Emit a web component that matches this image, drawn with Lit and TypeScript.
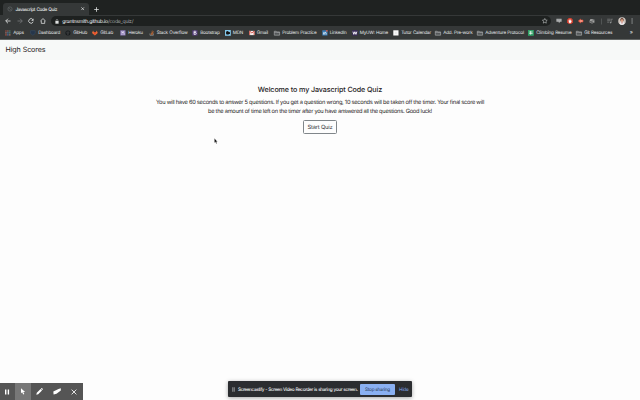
import { LitElement, html, svg, css } from "lit";
import { customElement } from "lit/decorators.js";
import { styleMap } from "lit/directives/style-map.js";

const folder = svg`<path d="M.3 1.3h2l.6.7h2.9v3.4H.3z" fill="#55585a" stroke="#b4b6b7" stroke-width=".6"/><path d="M.3 2.5h5.4" stroke="#b4b6b7" stroke-width=".5"/>`;
const square = (fill: string, inner: unknown) => svg`<rect x=".3" y=".3" width="5.4" height="5.4" fill=${fill}/>${inner}`;

interface Bookmark { label: string; width: number; icon: unknown }

const bookmarks: Bookmark[] = [
  { label: "Apps", width: 25, icon: svg`<g><path d="M.4.4h1.2v1.2H.4zM.4 4.4h1.2v1.2H.4z" fill="#d85a4b"/><path d="M2.4.4h1.2v1.2H2.4zM.4 2.4h1.2v1.2H.4zM4.4 4.4h1.2v1.2H4.4z" fill="#c78374"/><path d="M4.4.4h1.2v1.2H4.4zM4.4 2.4h1.2v1.2H4.4z" fill="#5aa08b"/><path d="M2.4 2.4h1.2v1.2H2.4zM2.4 4.4h1.2v1.2H2.4z" fill="#5487c2"/></g>` },
  { label: "Dashboard", width: 35, icon: svg`<path d="M.6.7h4.8v2.8L3 5.5.6 3.5z" fill="#26364a" stroke="#354c65" stroke-width=".6"/>` },
  { label: "GitHub", width: 27, icon: svg`<circle cx="3" cy="3" r="2.6" fill="#16191b"/><path d="M2.2 5.5V4C.9 3.5 1.2 2 1.7 1.7l.1-.6.7.4h1l.7-.4.1.6c.6.7.6 2-.5 2.3v1.5" fill="#333537"/>` },
  { label: "GitLab", width: 28, icon: svg`<path d="M0 3.2 1.1.4l.9 2h2l.9-2L6 3.2 3 5.6z" fill="#ed6a35"/><path d="m2 2.4 1 3.2 1-3.2z" fill="#df432b"/>` },
  { label: "Heroku", width: 28.5, icon: square("#8b78b6", svg`<path d="M2 1v1.8M2 5V3.5M2 2.8c2-.7 2.2-.2 2.2.5V5M4.2 1l-.5.9" fill="none" stroke="#fff" stroke-width=".7"/>`) },
  { label: "Stack Overflow", width: 43.5, icon: svg`<path d="M1 3.5v2h3.5v-2" fill="none" stroke="#a8a8a8" stroke-width=".6"/><path d="M1.8 4.5h2M2 3.3l2 .5M2.5 2l1.8 1.1M3.6.7l1.2 1.8" stroke="#e87532" stroke-width=".7"/>` },
  { label: "Bootstrap", width: 32.5, icon: square("#553d7d", svg`<path d="M2.1 1.3h1.3c1.2 0 1.2 1.5 0 1.5H2.1h1.4c1.3 0 1.3 1.8 0 1.8H2.1z" fill="none" stroke="#fff" stroke-width=".7"/>`) },
  { label: "MDN", width: 24, icon: svg`<rect width="6" height="6" fill="#83c9ed"/><path d="M1.1 1.7 2.5 1l.8.5 1.8.7v1.9H3.9L3.5 5 1.2 4.3z" fill="#111"/>` },
  { label: "Gmail", width: 25.5, icon: svg`<rect x=".3" y=".9" width="5.4" height="4.4" fill="#f2eeee"/><path d="M.7 5.2V1.1L3 3.1l2.3-2v4.1" fill="none" stroke="#d44a3d" stroke-width=".9"/>` },
  { label: "Problem Practice", width: 47.5, icon: folder },
  { label: "LinkedIn", width: 30, icon: square("#3c7eb8", svg`<path d="M1.6 2.4v2.3M2.8 2.4v2.3M2.8 3.2c.2-1 1.5-.8 1.5.1v1.4" fill="none" stroke="#fff" stroke-width=".7"/><circle cx="5" cy=".9" r=".9" fill="#d75545"/>`) },
  { label: "MyUW: Home", width: 41.5, icon: square("#39295c", svg`<path d="m1 1.7.9 2.8L3 1.8l1.1 2.7L5 1.7" fill="none" stroke="#fff" stroke-width=".9"/>`) },
  { label: "Tutor Calendar", width: 42, icon: square("#f8f8f8", svg`<path d="M3 2v2.2" stroke="#c8cacb" stroke-width=".5"/>`) },
  { label: "Add. Pre-work", width: 42, icon: folder },
  { label: "Adventure Protocol", width: 51, icon: folder },
  { label: "Climbing Resume", width: 48, icon: svg`<rect width="6" height="6" fill="#2fa164"/><path d="M1.2 2.1h3.6M1.2 3.7h3.6M2.7 1.2v3.6" stroke="#fff" stroke-width=".7"/>` },
  { label: "Git Resources", width: 42, icon: folder },
];

@customElement("browser-chrome")
export class BrowserChrome extends LitElement {
  static styles = css`
    :host { display: block; height: 40px; font-family: Inter, "Liberation Sans", sans-serif; background: #1f2221; color: #e4e6e7; text-rendering: geometricPrecision; }
    svg { display: block; flex: none; overflow: visible; }
    .tabs { height: 15px; display: flex; align-items: flex-end; padding-left: 3px; box-sizing: border-box; }
    .tab { width: 85.5px; height: 12px; background: #353838; border-radius: 3px 3px 0 0; display: flex; align-items: center; box-sizing: border-box; padding: 0 4px 0 4px; }
    .title { flex: 1; margin-left: 2.4px; padding-top: 1px; font-size: 4.7px; font-weight: 500; letter-spacing: -0.37px; word-spacing: 0.5px; white-space: nowrap; }
    .plus { margin: 0 0 3.5px 5.5px; }
    .toolbar { height: 12.5px; background: #353838; display: flex; align-items: center; box-sizing: border-box; padding: 0 6.5px 0 5px; }
    .nav { display: flex; gap: 5.6px; }
    .address { width: 500px; flex: none; height: 10px; border-radius: 5px; background: #1e2120; display: flex; align-items: center; box-sizing: border-box; padding: 0 3.5px 0 4px; margin-left: 5px; }
    .url { flex: 1; margin-left: 3.5px; padding-top: 1.2px; font-size: 5.1px; letter-spacing: -0.26px; color: #a4a7a8; white-space: nowrap; }
    .host { color: #f4f6f6; }
    .tools { flex: 1; display: flex; justify-content: space-between; align-items: center; margin-left: 5px; }
    .bookmarks { height: 11.5px; background: #353838; display: flex; align-items: center; box-sizing: border-box; padding: 0 7px 0 5px; }
    .bookmark { display: flex; align-items: center; gap: 2.4px; flex: none; font-size: 4.6px; letter-spacing: -0.19px; word-spacing: 0.3px; white-space: nowrap; color: #e4e7e8; }
    .bookmark span { padding-top: 1.2px; }
    .more { margin-left: auto; font-size: 5.5px; line-height: 6px; }
    .rule { height: 1px; background: #626564; }
  `;

  render() {
    return html`
      <div class="tabs">
        <div class="tab">
          <svg width="6" height="6" viewBox="0 0 6 6"><circle cx="3" cy="3" r="2.1" fill="none" stroke="#626667" stroke-width=".7"/><path d="m1.4 1.6 3.2 2.8" stroke="#626667" stroke-width=".6"/></svg>
          <span class="title">Javascript Code Quiz</span>
          <svg width="3.4" height="3.4" viewBox="0 0 4 4"><path d="m.4.4 3.2 3.2m0-3.2L.4 3.6" stroke="#e6e8e8" stroke-width=".8"/></svg>
        </div>
        <svg class="plus" width="5" height="5" viewBox="0 0 5 5"><path d="M2.5.2v4.6M.2 2.5h4.6" stroke="#e0e2e2" stroke-width=".8"/></svg>
      </div>
      <div class="toolbar">
        <div class="nav">
          <svg width="6" height="6" viewBox="0 0 6 6"><path d="M5.5 3H.8M3 .7.7 3 3 5.3" fill="none" stroke="#e2e4e4" stroke-width=".8"/></svg>
          <svg width="6" height="6" viewBox="0 0 6 6"><path d="M.5 3h4.7M3 .7 5.3 3 3 5.3" fill="none" stroke="#777a7b" stroke-width=".8"/></svg>
          <svg width="6" height="6" viewBox="0 0 6 6"><path d="M4.9 1.6A2.3 2.3 0 1 0 5.2 3.7" fill="none" stroke="#e2e4e4" stroke-width=".8"/><path d="M5.5.4v2.3H3.2z" fill="#e2e4e4"/></svg>
          <svg width="6" height="6" viewBox="0 0 6 6"><path d="M.4 3 3 .6 5.6 3M1.3 2.6v2.8h3.4V2.6" fill="none" stroke="#e2e4e4" stroke-width=".75"/></svg>
        </div>
        <div class="address">
          <svg width="4" height="5" viewBox="0 0 4 5"><path d="M.4 2h3.2v2.7H.4z" fill="#dfe1e1"/><path d="M1.1 2.2V1.4a.9.9 0 0 1 1.8 0v.8" fill="none" stroke="#dfe1e1" stroke-width=".5"/></svg>
          <span class="url"><span class="host">grantnsmith.github.io</span>/code_quiz/</span>
          <svg width="5.6" height="5.6" viewBox="0 0 6 6"><path d="m3 .5.8 1.7 1.8.2-1.3 1.3.3 1.8L3 4.6l-1.6.9.3-1.8L.4 2.4l1.8-.2z" fill="none" stroke="#c9cccc" stroke-width=".6"/></svg>
        </div>
        <div class="tools">
          <svg width="6" height="6" viewBox="0 0 6 6"><path d="M.4.8h5.2v3H4L3 5.3l-.4-1.5H.4z" fill="#b1b3b4"/><path d="M1.3 1.8h3.3" stroke="#858888" stroke-width=".5"/></svg>
          <svg width="6" height="6" viewBox="0 0 6 6"><path d="M1.8.1h2.4L5.9 1.8v2.4L4.2 5.9H1.8L.1 4.2V1.8z" fill="#d7412f"/><path d="M2 3V1.8M2.8 3V1.2M3.6 3V1.5M2 2.7h2.2v1.2L3.4 5h-.9L2 4z" fill="#fff" stroke="#fff" stroke-width=".5"/></svg>
          <svg width="6" height="6" viewBox="0 0 6 6"><path d="M0 3 2.8.6v1.2H5v.7l1 .5-1 .6v.6H2.8v1.2z" fill="#ea5b44"/><path d="M1.8 3h2.6" stroke="#ffd1c7" stroke-width=".9"/></svg>
          <svg width="6" height="6" viewBox="0 0 6 6"><path d="M.5 2.9 1.5 1l3.8.4.2 3.2L3 5.4.6 4.5z" fill="#a8a9a8"/><path d="m.7 3.5 2.5-.3L5 1.6M1.5 4.4h3" stroke="#303333" stroke-width=".6" fill="none"/></svg>
          <svg width="1" height="7" viewBox="0 0 1 7"><path d="M.5.5v6" stroke="#65696a" stroke-width=".6"/></svg>
          <svg width="6" height="6" viewBox="0 0 6 6"><path d="M.2 1.2h3.4M.2 2.7h3.1M.2 4.2h2M4.2 4.5V1.2h1.6" fill="none" stroke="#8d9091" stroke-width=".6"/><circle cx="3.6" cy="4.6" r=".8" fill="#8d9091"/></svg>
          <svg width="8" height="8" viewBox="0 0 8 8"><circle cx="4" cy="4" r="3.8" fill="#ccc4bd"/><path d="M2.3 3.7c-.2-3.7 3.6-3.7 3.4 0z" fill="#5a3528"/><ellipse cx="4" cy="3.4" rx="1.2" ry="1.5" fill="#d99b80"/><path d="M1.6 7c.3-3 4.5-3 4.8 0a3.8 3.8 0 0 1-4.8 0z" fill="#eef0f2"/><path d="m3.5 5 .5 2.6L4.5 5z" fill="#b24d48"/></svg>
          <svg width="2" height="6" viewBox="0 0 2 6"><path d="M.6.5h.9v.9H.6zM.6 2.5h.9v.9H.6zM.6 4.5h.9v.9H.6z" fill="#d8dada"/></svg>
        </div>
      </div>
      <div class="bookmarks">
        ${bookmarks.map((b) => html`<div class="bookmark" style=${styleMap({ width: `${b.width}px` })}>
          <svg width="5.8" height="5.8" viewBox="0 0 6 6">${b.icon}</svg><span>${b.label}</span>
        </div>`)}
        <span class="more">»</span>
      </div>
      <div class="rule"></div>
    `;
  }
}

@customElement("app-root")
export class AppRoot extends LitElement {
  static styles = css`
    :host { display: block; width: 640px; height: 400px; overflow: hidden; position: relative; background: #fdfdfd; color: #1e2123; font-family: Inter, "Liberation Sans", sans-serif; text-rendering: geometricPrecision; }
    svg { display: block; overflow: visible; }
    .navbar { height: 19.5px; background: #f7f9f8; display: flex; align-items: center; padding-left: 5.5px; font-size: 7.15px; letter-spacing: -0.1px; box-sizing: border-box; }
    .quiz { display: flex; flex-direction: column; align-items: center; padding-top: 25.4px; text-align: center; }
    h1 { margin: 0; font-size: 7.15px; line-height: 10px; font-weight: 500; letter-spacing: -0.1px; }
    p { margin: 4.2px 0 0; font-size: 5.7px; line-height: 8.6px; letter-spacing: -0.26px; white-space: nowrap; }
    button { margin: 3.9px 0 0; width: 34px; height: 13.5px; padding: 0.5px 0 0; border: 1px solid #80868a; border-radius: 1.5px; background: #fdfdfd; color: #303437; font: 5.7px Inter, "Liberation Sans", sans-serif; letter-spacing: -0.16px; text-rendering: geometricPrecision; }
    .pointer { position: absolute; left: 213.5px; top: 138px; }
    .recorder { position: absolute; left: 0; bottom: 0; width: 83px; height: 17px; box-sizing: border-box; padding-right: 1px; background: #555; display: flex; }
    .tool { flex: 1; display: flex; align-items: center; justify-content: center; }
    .tool:first-child { flex: 0 0 14.5px; }
    .selected { background: #777; }
    .sharing { position: absolute; left: 228px; top: 381px; width: 184px; height: 16px; box-sizing: border-box; background: #2b2d30; border-radius: 1px; box-shadow: 0 1px 4px rgba(0, 0, 0, 0.35); display: flex; align-items: center; padding-left: 4px; font-size: 4.7px; color: #f0f1f2; white-space: nowrap; }
    .message { flex: 0 0 121.8px; min-width: 0; margin-left: 3px; padding-top: 1px; letter-spacing: -0.37px; word-spacing: 0.3px; font-weight: 500; }
    .stop { flex: 0 0 35.5px; height: 11px; line-height: 12px; border-radius: 1px; background: #8ab0f2; color: #263754; text-align: center; letter-spacing: -0.26px; }
    .hide { margin-left: 3.8px; padding-top: 1px; color: #86aaea; letter-spacing: -0.2px; }
  `;

  render() {
    return html`
      <browser-chrome></browser-chrome>
      <nav class="navbar">High Scores</nav>
      <main class="quiz">
        <h1>Welcome to my Javascript Code Quiz</h1>
        <p>You will have 60 seconds to answer 5 questions. If you get a question wrong, 10 seconds will be taken off the timer. Your final score will<br>be the amount of time left on the timer after you have answered all the questions. Good luck!</p>
        <button>Start Quiz</button>
      </main>
      <svg class="pointer" width="4" height="6" viewBox="0 0 4 6"><path d="M.4.2v4.5l1-.8.8 1.8.8-.4-.8-1.6h1.3z" fill="#111" stroke="#fff" stroke-width=".25"/></svg>
      <div class="recorder">
        <div class="tool"><svg width="6" height="6" viewBox="0 0 6 6"><path d="M1 .5h1.4v5H1zM3.7.5h1.4v5H3.7z" fill="#fff"/></svg></div>
        <div class="tool selected"><svg width="6" height="7" viewBox="0 0 6 7"><path d="M1 .2v5l1.2-.9 1 2.3 1.1-.5-1-2.1h1.8z" fill="#fff"/></svg></div>
        <div class="tool"><svg width="7" height="7" viewBox="0 0 7 7"><path d="m.3 6.7.5-1.9L4.6 1 6 2.4 2.2 6.2zM4.9.7l.5-.5c.4-.4 1.8.9 1.4 1.4l-.5.5z" fill="#fff"/></svg></div>
        <div class="tool"><svg width="8" height="7" viewBox="0 0 8 7"><path d="M.3 3.6 5.5.9 7.8.3v2.3L3.5 5.8.6 6.6z" fill="#fff"/></svg></div>
        <div class="tool"><svg width="6" height="6" viewBox="0 0 6 6"><path d="m.6.6 4.8 4.8m0-4.8L.6 5.4" stroke="#f2f2f2" stroke-width=".9"/></svg></div>
      </div>
      <div class="sharing">
        <svg width="3" height="5" viewBox="0 0 3 5"><path d="M.4.2h.8v4.6H.4zM1.8.2h.8v4.6h-.8z" fill="#a7a9ab"/></svg>
        <span class="message">Screencastify - Screen Video Recorder is sharing your screen.</span>
        <div class="stop">Stop sharing</div>
        <span class="hide">Hide</span>
      </div>
    `;
  }
}
